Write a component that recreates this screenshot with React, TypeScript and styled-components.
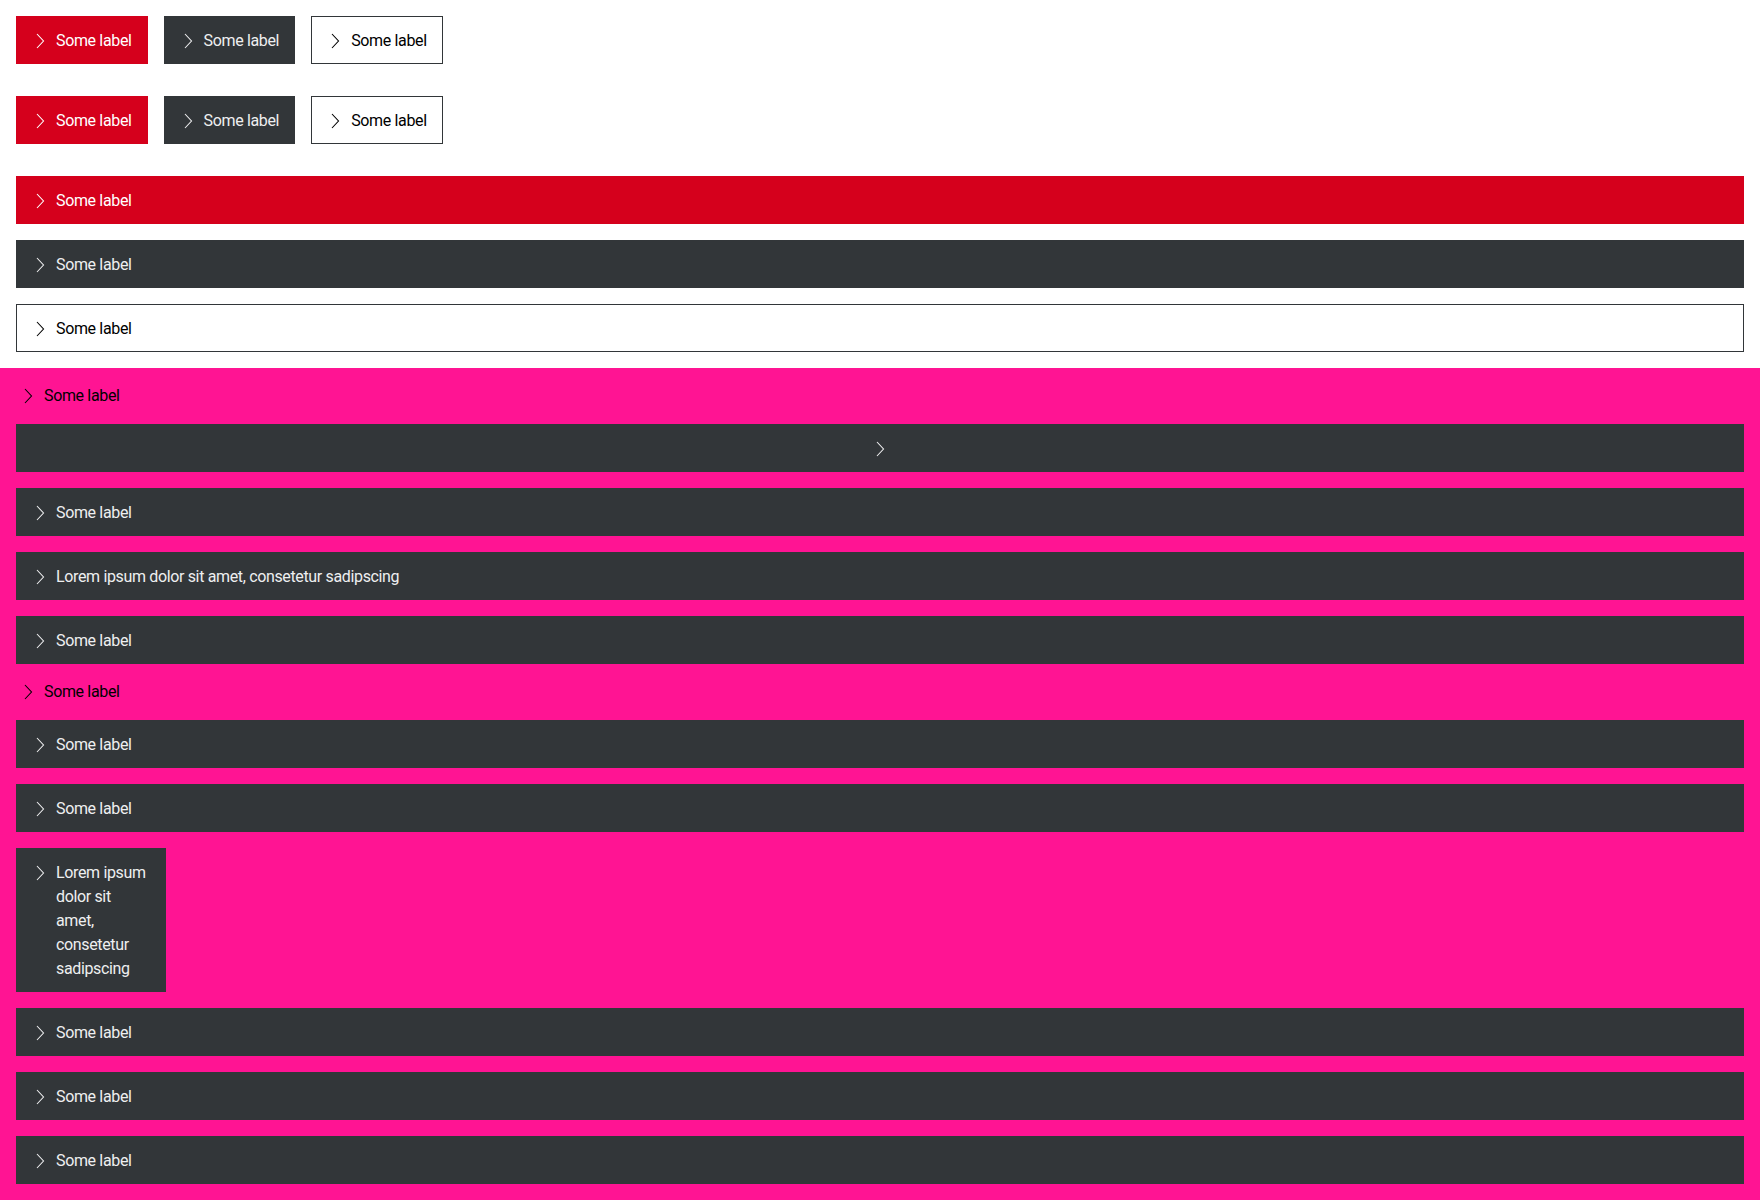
import React from 'react'
import styled, { createGlobalStyle, css } from 'styled-components'

type Variant = 'primary' | 'secondary' | 'tertiary'

const GlobalStyle = createGlobalStyle`
  html, body {
    margin: 0;
    padding: 0;
    background: #ffffff;
  }
  body {
    font-family: Roboto, "Liberation Sans", Arial, sans-serif;
    font-size: 16px;
    line-height: 24px;
    -webkit-font-smoothing: antialiased;
  }
`

const Page = styled.div`
  display: flex;
  flex-direction: column;
`

const LightSection = styled.section`
  display: flex;
  flex-direction: column;
  gap: 16px;
  padding: 16px;
  background: #ffffff;
`

const ButtonRow = styled.div`
  display: flex;
  gap: 16px;
  margin-bottom: 16px;
`

const ThemedSection = styled.section`
  display: flex;
  flex-direction: column;
  align-items: flex-start;
  gap: 16px;
  padding: 16px;
  background: #ff1493;
`

const variants = {
  primary: css`
    background: #d5001c;
    border-color: #d5001c;
    color: #ffffff;
  `,
  secondary: css`
    background: #323639;
    border-color: #323639;
    color: #eeeff0;
  `,
  tertiary: css`
    background: #ffffff;
    border-color: #323639;
    color: #000000;
  `,
}

const Button = styled.button<{ $variant: Variant; $wide?: boolean; $iconOnly?: boolean; $width?: number }>`
  box-sizing: border-box;
  display: flex;
  align-items: flex-start;
  justify-content: ${(p) => (p.$iconOnly ? 'center' : 'flex-start')};
  gap: 8px;
  min-height: 48px;
  padding: 12px 15px 10px;
  border: 1px solid;
  border-radius: 0;
  font: inherit;
  letter-spacing: -0.35px;
  text-align: left;
  cursor: pointer;
  align-self: ${(p) => (p.$wide ? 'stretch' : 'flex-start')};
  ${(p) => p.$width && `width: ${p.$width}px;`}
  ${(p) => variants[p.$variant]}
`

const Link = styled.a`
  display: flex;
  align-items: center;
  gap: 8px;
  height: 24px;
  padding-left: 4px;
  color: #000000;
  text-decoration: none;
  letter-spacing: -0.35px;
  cursor: pointer;
`

const IconBox = styled.span`
  flex: 0 0 16px;
  display: flex;
  align-items: center;
  justify-content: center;
  height: 24px;
`

const Chevron = () => (
  <svg width="16" height="16" viewBox="0 0 16 16" fill="none">
    <polyline points="5,1 11.5,8 5,15" stroke="currentColor" strokeWidth="1.1" />
  </svg>
)

function Btn({
  variant,
  wide,
  iconOnly,
  width,
  children,
}: {
  variant: Variant
  wide?: boolean
  iconOnly?: boolean
  width?: number
  children?: React.ReactNode
}) {
  return (
    <Button $variant={variant} $wide={wide} $iconOnly={iconOnly} $width={width}>
      <IconBox>
        <Chevron />
      </IconBox>
      {!iconOnly && <span>{children}</span>}
    </Button>
  )
}

function TextLink({ children }: { children: React.ReactNode }) {
  return (
    <Link>
      <IconBox>
        <Chevron />
      </IconBox>
      <span>{children}</span>
    </Link>
  )
}

export default function App() {
  const label = 'Some label'
  const lorem = 'Lorem ipsum dolor sit amet, consetetur sadipscing'

  return (
    <Page>
      <GlobalStyle />
      <LightSection>
        <ButtonRow>
          <Btn variant="primary">{label}</Btn>
          <Btn variant="secondary">{label}</Btn>
          <Btn variant="tertiary">{label}</Btn>
        </ButtonRow>
        <ButtonRow>
          <Btn variant="primary">{label}</Btn>
          <Btn variant="secondary">{label}</Btn>
          <Btn variant="tertiary">{label}</Btn>
        </ButtonRow>
        <Btn variant="primary" wide>{label}</Btn>
        <Btn variant="secondary" wide>{label}</Btn>
        <Btn variant="tertiary" wide>{label}</Btn>
      </LightSection>

      <ThemedSection>
        <TextLink>{label}</TextLink>
        <Btn variant="secondary" wide iconOnly />
        <Btn variant="secondary" wide>{label}</Btn>
        <Btn variant="secondary" wide>{lorem}</Btn>
        <Btn variant="secondary" wide>{label}</Btn>
        <TextLink>{label}</TextLink>
        <Btn variant="secondary" wide>{label}</Btn>
        <Btn variant="secondary" wide>{label}</Btn>
        <Btn variant="secondary" width={150}>{lorem}</Btn>
        <Btn variant="secondary" wide>{label}</Btn>
        <Btn variant="secondary" wide>{label}</Btn>
        <Btn variant="secondary" wide>{label}</Btn>
      </ThemedSection>
    </Page>
  )
}
